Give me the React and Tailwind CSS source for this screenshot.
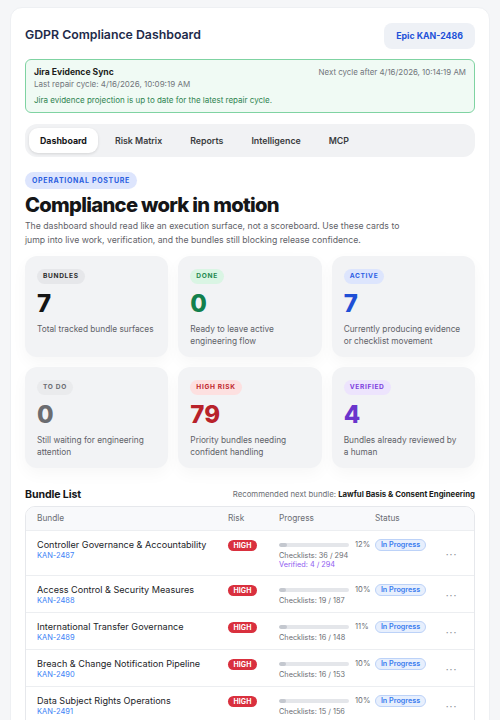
import React from "react";

const cards = [
  { label: "BUNDLES", value: "7", desc: "Total tracked bundle surfaces", badge: "bg-[#e6e7ea] text-[#2a2a2a]", num: "text-[#151515]" },
  { label: "DONE", value: "0", desc: "Ready to leave active engineering flow", badge: "bg-[#daf5e4] text-[#1f8a50]", num: "text-[#12804d]" },
  { label: "ACTIVE", value: "7", desc: "Currently producing evidence or checklist movement", badge: "bg-[#dde5fd] text-[#2d5fe4]", num: "text-[#1f4fd6]" },
  { label: "TO DO", value: "0", desc: "Still waiting for engineering attention", badge: "bg-[#eaebed] text-[#6a6d72]", num: "text-[#6b6c70]" },
  { label: "HIGH RISK", value: "79", desc: "Priority bundles needing confident handling", badge: "bg-[#fde0e0] text-[#c0262d]", num: "text-[#b8222a]" },
  { label: "VERIFIED", value: "4", desc: "Bundles already reviewed by a human", badge: "bg-[#ede4fd] text-[#7e3fe0]", num: "text-[#6a35cc]" },
];

const rows = [
  { name: "Controller Governance & Accountability", key: "KAN-2487", pct: 12, done: 36, total: 294, verified: "4 / 294" },
  { name: "Access Control & Security Measures", key: "KAN-2488", pct: 10, done: 19, total: 187 },
  { name: "International Transfer Governance", key: "KAN-2489", pct: 11, done: 16, total: 148 },
  { name: "Breach & Change Notification Pipeline", key: "KAN-2490", pct: 10, done: 16, total: 153 },
  { name: "Data Subject Rights Operations", key: "KAN-2491", pct: 10, done: 15, total: 156 },
  { name: "Lawful Basis & Consent Engineering", key: "KAN-2492", pct: 9, done: 12, total: 131 },
  { name: "Records of Processing Activities", key: "KAN-2493", pct: 8, done: 10, total: 122 },
];

function Row({ r }) {
  return (
    <div className="grid grid-cols-[191px_51px_96px_56px_1fr] pl-[11px] pt-[8px] pb-[6px] border-t border-[#eceef1] items-start">
      <div className="flex flex-col">
        <div className="text-[9.1px] leading-[12px] text-[#222428]">{r.name}</div>
        <div className="text-[7.5px] leading-[10px] text-[#3b82f6]">{r.key}</div>
      </div>
      <div className="flex pt-[1px]">
        <span className="flex items-center justify-center w-[29px] h-[11px] rounded-full bg-[#d9303e] text-white text-[7px] leading-none font-bold tracking-[0.02em]">HIGH</span>
      </div>
      <div className="flex flex-col">
        <div className="flex items-center h-[12px] gap-[6px]">
          <div className="w-[70px] h-[3.5px] rounded-full bg-[#e4e6ea] overflow-hidden">
            <div className="h-full bg-[#c4c8cf] rounded-full" style={{ width: `${r.pct}%` }} />
          </div>
          <span className="text-[7.6px] leading-none text-[#6b6e74]">{r.pct}%</span>
        </div>
        <div className="text-[7.3px] leading-[10px] text-[#6b6e74]">Checklists: {r.done} / {r.total}</div>
        {r.verified && <div className="text-[7.3px] leading-[8px] text-[#8f5cf0]">Verified: {r.verified}</div>}
      </div>
      <div className="flex">
        <span className="flex items-center justify-center w-[51px] h-[12px] rounded-full bg-[#e7effd] border border-[#bcd2f8] text-[#3a7cef] text-[7.2px] leading-none font-semibold">In Progress</span>
      </div>
      <div className="self-center flex justify-center pr-[2px] text-[#8a8d92] text-[10px] leading-[10px] tracking-[1px]">···</div>
    </div>
  );
}

export default function App() {
  return (
    <div className="min-h-screen bg-[#f5f6f8] pt-[7px] px-[10px] font-['Inter','Liberation_Sans',sans-serif]">
      <div className="bg-white rounded-t-[12px] border border-[#eef0f3] px-[14px] pt-[14px] pb-[20px]">
        {/* header */}
        <div className="flex items-center justify-between h-[27px]">
          <h1 className="text-[12.3px] font-semibold text-[#1e2b4a]">GDPR Compliance Dashboard</h1>
          <button className="h-[26px] px-[12px] rounded-[8px] bg-[#eef1f6] text-[#1f52d9] text-[8.8px] font-bold">Epic KAN-2486</button>
        </div>

        {/* sync box */}
        <div className="mt-[10px] rounded-[6px] border border-[#7fd3a2] bg-[#f0faf4] px-[8px] pt-[6px] pb-[5px]">
          <div className="flex justify-between">
            <div className="flex flex-col">
              <span className="text-[8.6px] leading-[12px] font-bold text-[#1c1d20]">Jira Evidence Sync</span>
              <span className="text-[8px] leading-[12px] text-[#71757b]">Last repair cycle: 4/16/2026, 10:09:19 AM</span>
            </div>
            <span className="text-[7.9px] leading-[12px] text-[#71757b]">Next cycle after 4/16/2026, 10:14:19 AM</span>
          </div>
          <div className="mt-[4px] text-[8px] leading-[13px] text-[#2f8450]">Jira evidence projection is up to date for the latest repair cycle.</div>
        </div>

        {/* tabs */}
        <div className="mt-[11px] flex gap-[6px] rounded-[12px] bg-[#f1f2f4] p-[4px]">
          {["Dashboard", "Risk Matrix", "Reports", "Intelligence", "MCP"].map((t, i) => (
            <div
              key={t}
              className={
                i === 0
                  ? "h-[25px] px-[11px] flex items-center rounded-[9px] bg-white shadow-[0_1px_3px_rgba(0,0,0,0.12)] text-[8.8px] font-bold text-[#151618]"
                  : "h-[25px] px-[11px] flex items-center text-[8.8px] font-semibold text-[#3a3c40]"
              }
            >
              {t}
            </div>
          ))}
        </div>

        {/* posture */}
        <div className="mt-[15px] flex">
          <span className="flex items-center h-[17px] px-[7px] rounded-full bg-[#dde5fd] text-[#2b5fe0] text-[7px] leading-none font-bold tracking-[0.1em]">OPERATIONAL POSTURE</span>
        </div>
        <h2 className="mt-[3px] text-[20.2px] leading-[25px] font-extrabold tracking-[-0.035em] text-[#151618]">Compliance work in motion</h2>
        <p className="mt-[2px] max-w-[395px] text-[8.7px] leading-[14px] text-[#5f6268]">
          The dashboard should read like an execution surface, not a scoreboard. Use these cards to jump into live work, verification, and the bundles still blocking release confidence.
        </p>

        {/* cards */}
        <div className="mt-[9px] grid grid-cols-3 gap-[10px]">
          {cards.map((c) => (
            <div key={c.label} className="flex flex-col items-start rounded-[12px] bg-[#f2f3f5] px-[12px] pt-[12.5px] pb-[10px] h-[101px] shadow-[0_6px_16px_rgba(15,20,30,0.035)]">
              <span className={`flex items-center h-[15px] px-[6px] rounded-full text-[6.6px] leading-none font-bold tracking-[0.1em] ${c.badge}`}>{c.label}</span>
              <div className={`mt-[8px] text-[24px] leading-[24px] font-extrabold ${c.num}`}>{c.value}</div>
              <div className="mt-[7px] text-[8.3px] leading-[12px] text-[#5f6268]">{c.desc}</div>
            </div>
          ))}
        </div>

        {/* bundle list */}
        <div className="mt-[19px] flex items-center justify-between">
          <h3 className="text-[10.6px] font-bold text-[#151618] tracking-[-0.01em]">Bundle List</h3>
          <div className="text-[7.8px] text-[#6b6e74]">
            Recommended next bundle: <span className="font-bold text-[#1c1d20]">Lawful Basis &amp; Consent Engineering</span>
          </div>
        </div>

        <div className="mt-[3px] rounded-[10px] border border-[#e6e8ec] overflow-hidden">
          <div className="grid grid-cols-[191px_51px_96px_56px_1fr] pl-[11px] h-[23px] items-center bg-[#f8f9fb] text-[8.3px] text-[#6b6e74]">
            <span>Bundle</span>
            <span>Risk</span>
            <span>Progress</span>
            <span>Status</span>
            <span />
          </div>
          {rows.map((r) => (
            <Row key={r.key} r={r} />
          ))}
        </div>
      </div>
    </div>
  );
}
